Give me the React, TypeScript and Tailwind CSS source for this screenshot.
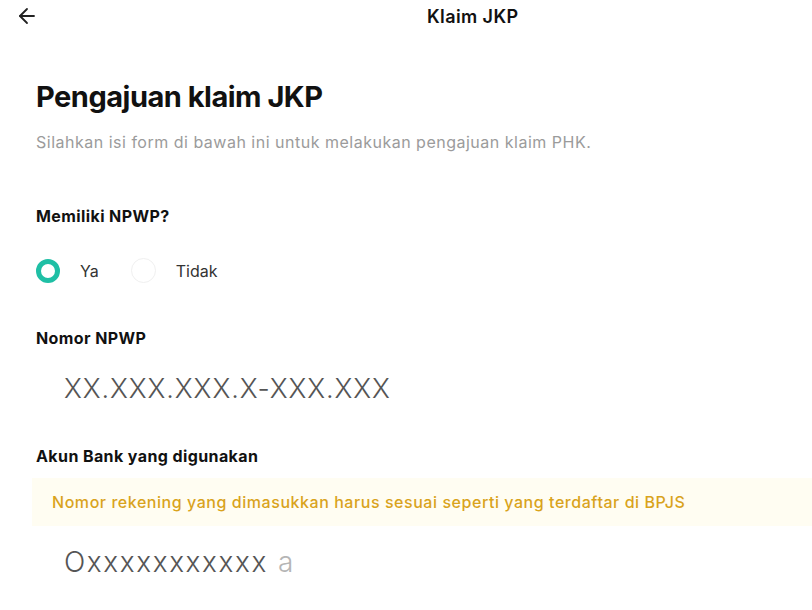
import { ArrowLeft } from "lucide-react";

export default function App() {
  return (
    <div className="min-h-[610px] w-full bg-white font-['Inter',sans-serif] text-[#111]">
      {/* Top bar */}
      <div className="flex h-[32px] items-center">
        <button className="ml-[14px] flex h-[26px] w-[26px] items-center justify-center text-[#222]">
          <ArrowLeft className="h-[24px] w-[24px]" strokeWidth={1.8} />
        </button>
        <div className="ml-[387px] text-[18px] font-semibold tracking-[0.4px]">Klaim JKP</div>
      </div>

      <div className="px-[36px]">
        <h1 className="mt-[47px] text-[29px] font-bold leading-[36px] tracking-[-0.5px]">
          Pengajuan klaim JKP
        </h1>
        <p className="mt-[17px] text-[16px] leading-[20px] tracking-[0.5px] text-[#9b9b9b]">
          Silahkan isi form di bawah ini untuk melakukan pengajuan klaim PHK.
        </p>

        {/* NPWP yes / no */}
        <div className="mt-[54px] text-[16px] font-bold leading-[20px] tracking-[0.4px]">Memiliki NPWP?</div>
        <div className="mt-[32px] flex items-center">
          <span className="h-[24px] w-[24px] rounded-full border-[5px] border-[#1fbfa5]" />
          <span className="ml-[20px] text-[16px] text-[#333]">Ya</span>
          <span className="ml-[32px] h-[25px] w-[25px] rounded-full border border-[#f0f0f0]" />
          <span className="ml-[20px] text-[16px] text-[#333]">Tidak</span>
        </div>

        <div className="mt-[45px] text-[16px] font-bold leading-[20px] tracking-[0.4px]">Nomor NPWP</div>
        <input
          className="mt-[24px] ml-[28px] w-[420px] bg-transparent text-[27px] font-light leading-[34px] tracking-[0.9px] text-[#555] outline-none placeholder:text-[#555]"
          placeholder="XX.XXX.XXX.X-XXX.XXX"
        />

        <div className="mt-[40px] text-[16px] font-bold leading-[20px] tracking-[0.4px]">Akun Bank yang digunakan</div>
      </div>

      {/* Bank account notice */}
      <div className="ml-[32px] mt-[12px] flex h-[48px] items-center bg-[#fffdf2] pl-[20px]">
        <span className="text-[16px] font-medium tracking-[0.55px] text-[#d9a31c]">
          Nomor rekening yang dimasukkan harus sesuai seperti yang terdaftar di BPJS
        </span>
      </div>

      <div className="mt-[19px] flex items-baseline pl-[64px] text-[28px] font-light leading-[34px] tracking-[1.6px]">
        <span className="text-[#555]">Oxxxxxxxxxxx</span>
        <span className="ml-[10px] text-[#b5b5b5]">a</span>
      </div>
    </div>
  );
}
